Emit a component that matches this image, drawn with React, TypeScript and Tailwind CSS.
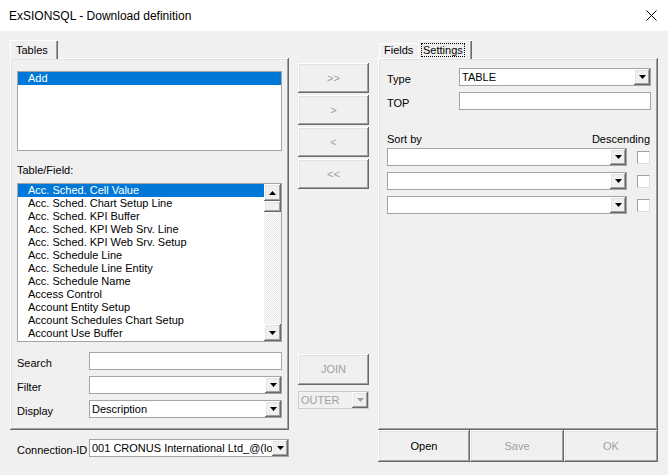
import React from "react";

const raised =
  "shadow-[inset_-1px_-1px_0_#696969,inset_1px_1px_0_#ffffff,inset_-2px_-2px_0_#a0a0a0,inset_2px_2px_0_#e3e3e3]";

const tableFields = [
  "Acc. Sched. Cell Value",
  "Acc. Sched. Chart Setup Line",
  "Acc. Sched. KPI Buffer",
  "Acc. Sched. KPI Web Srv. Line",
  "Acc. Sched. KPI Web Srv. Setup",
  "Acc. Schedule Line",
  "Acc. Schedule Line Entity",
  "Acc. Schedule Name",
  "Access Control",
  "Account Entity Setup",
  "Account Schedules Chart Setup",
  "Account Use Buffer",
];

const Triangle = ({ up = false, disabled = false }: { up?: boolean; disabled?: boolean }) => (
  <svg width="7" height="4" viewBox="0 0 7 4" className={up ? "rotate-180" : ""}>
    <polygon points="0,0 7,0 3.5,4" fill={disabled ? "#a0a0a0" : "#000"} />
  </svg>
);

const ArrowButton = ({ up = false, disabled = false }: { up?: boolean; disabled?: boolean }) => (
  <div className={`w-[16px] h-[16px] shrink-0 bg-[#f0f0f0] flex items-center justify-center ${raised}`}>
    <Triangle up={up} disabled={disabled} />
  </div>
);

const Combo = ({
  value = "",
  className = "",
  disabled = false,
}: {
  value?: string;
  className?: string;
  disabled?: boolean;
}) => (
  <div
    className={`h-[18px] flex items-center border ${
      disabled ? "border-[#cccccc] bg-[#f0f0f0] text-[#a0a0a0]" : "border-[#a5a5a5] bg-white"
    } ${className}`}
  >
    <div className="flex-1 overflow-hidden whitespace-nowrap pl-[2px] leading-[16px]">{value}</div>
    <ArrowButton disabled={disabled} />
  </div>
);

const Button = ({
  label,
  disabled = false,
  className = "",
}: {
  label: string;
  disabled?: boolean;
  className?: string;
}) => (
  <div
    className={`flex items-center justify-center bg-[#f0f0f0] ${raised} ${
      disabled ? "text-[#a0a0a0]" : "text-black"
    } ${className}`}
  >
    {label}
  </div>
);

const FieldRow = ({ label, children }: { label: string; children: React.ReactNode }) => (
  <div className="flex items-start h-[18px]">
    <div className="w-[72px] h-[18px] pt-[5px] leading-[13px]">{label}</div>
    {children}
  </div>
);

export default function App() {
  return (
    <div className="w-[668px] h-[475px] bg-[#f0f0f0] text-[11px] leading-[13px] text-black font-['Liberation_Sans',Arial,sans-serif] flex flex-col overflow-hidden">
      {/* title bar */}
      <div className="h-[31px] bg-white flex items-center justify-between pl-[9px] pr-[11px]">
        <span className="text-[12px] leading-[16px] pt-[1px]">ExSIONSQL - Download definition</span>
        <svg width="11" height="11" viewBox="0 0 11 11">
          <path d="M0.5 0.5 L10.5 10.5 M10.5 0.5 L0.5 10.5" stroke="#000" strokeWidth="1" />
        </svg>
      </div>

      <div className="flex px-[10px] pt-[9px]">
        {/* left column */}
        <div className="w-[279px] flex flex-col">
          <div className="h-[19px] flex items-end relative z-10 -mb-px">
            <div className="h-[19px] w-[48px] bg-[#f0f0f0] border-l border-t border-white shadow-[inset_-1px_0_0_#696969,inset_-2px_0_0_#a0a0a0] pl-[5px] pt-[3px]">
              Tables
            </div>
          </div>
          <div className={`h-[372px] flex flex-col pt-[13px] px-[7px] ${raised}`}>
            {/* tables list */}
            <div className="w-[265px] h-[80px] bg-white border border-[#a5a5a5]">
              <div className="h-[13px] bg-[#0078d7] text-white pl-[10px] leading-[13px]">Add</div>
            </div>
            <div className="mt-[13px] h-[13px] leading-[13px]">Table/Field:</div>
            {/* table/field list */}
            <div className="mt-[6px] w-[265px] h-[159px] bg-white border border-[#a5a5a5] flex">
              <div className="flex-1 flex flex-col">
                {tableFields.map((f, i) => (
                  <div
                    key={f}
                    className={`h-[13px] leading-[13px] pl-[10px] whitespace-nowrap ${
                      i === 0 ? "bg-[#0078d7] text-white" : ""
                    }`}
                  >
                    {f}
                  </div>
                ))}
              </div>
              <div className="w-[17px] flex flex-col bg-[repeating-conic-gradient(#ffffff_0_25%,#e6e6e6_0_50%)] bg-[length:2px_2px]">
                <div className={`h-[17px] w-[17px] bg-[#f0f0f0] flex items-center justify-center ${raised}`}>
                  <Triangle up />
                </div>
                <div className={`h-[11px] w-[17px] bg-[#f0f0f0] ${raised}`} />
                <div className="flex-1" />
                <div className={`h-[17px] w-[17px] bg-[#f0f0f0] flex items-center justify-center ${raised}`}>
                  <Triangle />
                </div>
              </div>
            </div>
            <div className="mt-[10px] flex flex-col gap-[6px]">
              <FieldRow label="Search">
                <div className="w-[193px] h-[18px] bg-white border border-[#a5a5a5]" />
              </FieldRow>
              <FieldRow label="Filter">
                <Combo className="w-[193px]" />
              </FieldRow>
              <FieldRow label="Display">
                <Combo className="w-[193px]" value="Description" />
              </FieldRow>
            </div>
          </div>
          <div className="mt-[9px] pl-[7px]">
            <FieldRow label="Connection-ID">
              <Combo className="w-[200px]" value="001 CRONUS International Ltd_@(local)" />
            </FieldRow>
          </div>
        </div>

        {/* middle buttons */}
        <div className="ml-[9px] w-[71px] mt-[23px] flex flex-col">
          <div className="flex flex-col gap-[2px]">
            <Button label=">>" disabled className="h-[30px]" />
            <Button label=">" disabled className="h-[30px]" />
            <Button label="<" disabled className="h-[30px]" />
            <Button label="<<" disabled className="h-[30px]" />
          </div>
          <Button label="JOIN" disabled className="h-[31px] mt-[165px]" />
          <Combo className="w-[71px] mt-[6px]" value="OUTER" disabled />
        </div>

        {/* right column */}
        <div className="ml-[9px] w-[280px] flex flex-col">
          <div className="h-[19px] flex items-end relative z-10 -mb-px">
            <div className="h-[16px] w-[39px] ml-px border-t border-l border-white pl-[4px] leading-[13px]">
              Fields
            </div>
            <div className="h-[19px] w-[54px] bg-[#f0f0f0] border-l border-t border-white shadow-[inset_-1px_0_0_#696969,inset_-2px_0_0_#a0a0a0] pl-[2px] pt-[2px]">
              <span className="inline-block border border-dotted border-black px-[1px] leading-[12px]">
                Settings
              </span>
            </div>
          </div>
          <div className={`h-[372px] flex flex-col pt-[10px] pl-[9px] ${raised}`}>
            <FieldRow label="Type">
              <Combo className="w-[192px]" value="TABLE" />
            </FieldRow>
            <div className="mt-[6px]">
              <FieldRow label="TOP">
                <div className="w-[192px] h-[18px] bg-white border border-[#a5a5a5]" />
              </FieldRow>
            </div>
            <div className="mt-[23px] h-[13px] leading-[13px] w-[263px] flex justify-between">
              <span>Sort by</span>
              <span>Descending</span>
            </div>
            <div className="mt-[2px] flex flex-col gap-[6px]">
              {[0, 1, 2].map((i) => (
                <div key={i} className="flex items-center">
                  <Combo className="w-[240px]" />
                  <div className="ml-[10px] w-[13px] h-[13px] bg-white border border-[#a0a0a0] border-b-[#dcdcdc] border-r-[#dcdcdc]" />
                </div>
              ))}
            </div>
          </div>
          <div className="flex h-[32px]">
            <Button label="Open" className="w-[92px]" />
            <Button label="Save" disabled className="w-[94px]" />
            <Button label="OK" disabled className="w-[94px]" />
          </div>
        </div>
      </div>
    </div>
  );
}
